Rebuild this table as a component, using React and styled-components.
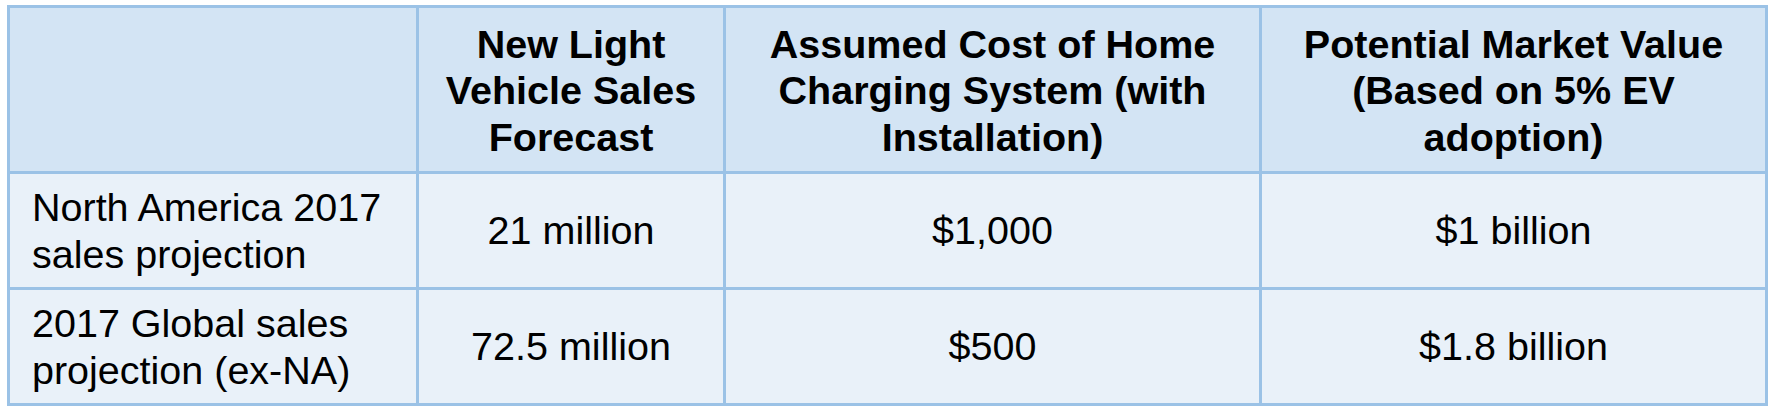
import React from 'react';
import styled, { createGlobalStyle } from 'styled-components';

const color = {
  border: '#9bc2e6',
  head: '#d3e4f4',
  body: '#e9f1f9',
  text: '#000000',
};

const GlobalStyle = createGlobalStyle`
  html, body {
    margin: 0;
    padding: 0;
    background: #ffffff;
  }
  body {
    font-family: "Liberation Sans", Arial, sans-serif;
  }
`;

const Page = styled.div`
  padding: 5px 0 0 7px;
`;

const Table = styled.table`
  width: 1758px;
  table-layout: fixed;
  border-collapse: collapse;
  border: 3px solid ${color.border};
  font-family: "Liberation Sans", Arial, sans-serif;
  font-size: 39.5px;
  line-height: 46.5px;
  color: ${color.text};
`;

const HeadRow = styled.tr`
  height: 166px;
  background: ${color.head};
`;

const BodyRow = styled.tr`
  height: 116px;
  background: ${color.body};
`;

const HeadCell = styled.th`
  border: 3px solid ${color.border};
  padding: 2px 10px 0;
  font-weight: 700;
  text-align: center;
  vertical-align: middle;
`;

const Cell = styled.td`
  border: 3px solid ${color.border};
  padding: ${({ $label }) => ($label ? '0 10px 0 22px' : '0 10px')};
  font-weight: 400;
  text-align: ${({ $label }) => ($label ? 'left' : 'center')};
  vertical-align: middle;
`;

const columns = [409, 307, 536, 506];

const headers = [
  [],
  ['New Light', 'Vehicle Sales', 'Forecast'],
  ['Assumed Cost of Home', 'Charging System (with', 'Installation)'],
  ['Potential Market Value', '(Based on 5% EV', 'adoption)'],
];

const rows = [
  {
    label: ['North America 2017', 'sales projection'],
    values: ['21 million', '$1,000', '$1 billion'],
  },
  {
    label: ['2017 Global sales', 'projection (ex-NA)'],
    values: ['72.5 million', '$500', '$1.8 billion'],
  },
];

const Lines = ({ lines }) =>
  lines.map((line, i) => (
    <React.Fragment key={i}>
      {i > 0 && <br />}
      {line}
    </React.Fragment>
  ));

const App = () => (
  <Page>
    <GlobalStyle />
    <Table>
      <colgroup>
        {columns.map((w, i) => (
          <col key={i} style={{ width: w }} />
        ))}
      </colgroup>
      <thead>
        <HeadRow>
          {headers.map((lines, i) => (
            <HeadCell key={i}>
              <Lines lines={lines} />
            </HeadCell>
          ))}
        </HeadRow>
      </thead>
      <tbody>
        {rows.map((row, r) => (
          <BodyRow key={r}>
            <Cell $label>
              <Lines lines={row.label} />
            </Cell>
            {row.values.map((v, i) => (
              <Cell key={i}>{v}</Cell>
            ))}
          </BodyRow>
        ))}
      </tbody>
    </Table>
  </Page>
);

export default App;
